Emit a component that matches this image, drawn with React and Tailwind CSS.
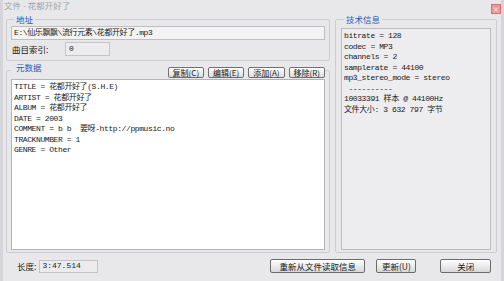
import React from 'react';

const metaLines = [
  'TITLE = 花都开好了(S.H.E)',
  'ARTIST = 花都开好了',
  'ALBUM = 花都开好了',
  'DATE = 2003',
  'COMMENT = b b  要呀-http://ppmusic.no',
  'TRACKNUMBER = 1',
  'GENRE = Other',
];

const techLines = [
  'bitrate = 128',
  'codec = MP3',
  'channels = 2',
  'samplerate = 44100',
  'mp3_stereo_mode = stereo',
  ' ----------',
  '10033391 样本 @ 44100Hz',
  '文件大小: 3 632 797 字节',
];

function SmallButton({ children }) {
  return (
    <button className="h-[11px] px-[4px] flex items-center justify-center border border-[#707070] rounded-[2px] bg-gradient-to-b from-white to-[#dcdcdc] text-[8px] leading-none text-[#202020]">
      {children}
    </button>
  );
}

function BigButton({ children, w }) {
  return (
    <button className={`${w} h-[14px] flex items-center justify-center border border-[#6c6c6c] rounded-[2px] bg-gradient-to-b from-white to-[#d8d8d8] text-[8.5px] leading-none text-[#202020]`}>
      {children}
    </button>
  );
}

export default function App() {
  return (
    <div className="w-[504px] h-[281px] bg-[#e8e8eb] border-l-[3px] border-r-[3px] border-[#d6d6da] flex flex-col font-['Noto_Sans_CJK_SC',sans-serif] text-[#1a1a1a] overflow-hidden">
      {/* title bar */}
      <div className="h-[14px] flex items-start justify-between pl-[1px] pr-[0px]">
        <span className="text-[8.5px] leading-[11px] text-[#a4a4a8] whitespace-pre">文件 - 花都开好了</span>
        <span className="mt-[4px] w-[10px] h-[10px] bg-[#e99a9a] border border-[#d87070] flex items-center justify-center text-white text-[7px] leading-none">
          ×
        </span>
      </div>

      <div className="flex gap-[5px] pl-[3px]">
        {/* left column */}
        <div className="w-[324px] flex flex-col">
          <fieldset className="border border-[#cdcdd2] rounded-[2px] px-[4px] pb-[4px]">
            <legend className="ml-[3px] px-[2px] text-[8.5px] leading-[11px] text-[#2a5bb0]">地址</legend>
            <div className="mt-[1px] h-[14px] bg-[#f3f3f3] border border-[#bdbdc2] flex items-center px-[2px] font-['Liberation_Mono','Noto_Sans_CJK_SC',monospace] text-[8px] tracking-[-0.4px] whitespace-pre">
              E:\仙乐飘飘\流行元素\花都开好了.mp3
            </div>
            <div className="mt-[2px] h-[14px] flex items-center">
              <span className="w-[50px] pl-[1px] text-[8.5px] leading-none">曲目索引:</span>
              <div className="ml-[4px] w-[45px] h-[14px] bg-[#ececee] border border-[#c4c4c8] flex items-center px-[3px] font-['Liberation_Mono',monospace] text-[8px]">
                0
              </div>
            </div>
          </fieldset>

          <fieldset className="mt-[1px] border border-[#cdcdd2] rounded-[2px] px-[4px] pb-[2px]">
            <legend className="w-full flex items-start justify-between">
              <span className="ml-[3px] px-[2px] text-[8.5px] leading-[11px] text-[#2a5bb0]">元数据</span>
              <div className="mt-[5px] flex gap-[4px] pr-[0px]">
                <SmallButton>复制(C)</SmallButton>
                <SmallButton>编辑(E)</SmallButton>
                <SmallButton>添加(A)</SmallButton>
                <SmallButton>移除(R)</SmallButton>
              </div>
            </legend>
            <div className="mt-[1px] h-[171px] bg-white border border-[#b4b4b8] px-[2px] pt-[2px] font-['Liberation_Mono','Noto_Sans_CJK_SC',monospace] text-[8px] leading-[10.5px] tracking-[-0.4px] whitespace-pre">
              {metaLines.map((l, i) => (
                <div key={i}>{l}</div>
              ))}
            </div>
          </fieldset>
        </div>

        {/* right column */}
        <fieldset className="w-[162px] border border-[#cdcdd2] rounded-[2px] px-[5px] pb-[2px]">
          <legend className="ml-[3px] px-[2px] text-[8.5px] leading-[11px] text-[#2a5bb0]">技术信息</legend>
          <div className="mt-[3px] h-[222px] bg-[#ededef] border border-[#bcbcc0] px-[2px] pt-[2px] font-['Liberation_Mono','Noto_Sans_CJK_SC',monospace] text-[8px] leading-[10.5px] tracking-[-0.4px] whitespace-pre">
            {techLines.map((l, i) => (
              <div key={i}>{l}</div>
            ))}
          </div>
        </fieldset>
      </div>

      {/* bottom row */}
      <div className="mt-[6px] flex items-center pl-[14px]">
        <span className="text-[8.5px] leading-none">长度:</span>
        <div className="ml-[3px] w-[59px] h-[13px] bg-[#ececee] border border-[#c4c4c8] flex items-center px-[2px] font-['Liberation_Mono',monospace] text-[8px]">
          3:47.514
        </div>
        <div className="ml-[172px]">
          <BigButton w="w-[95px]">重新从文件读取信息</BigButton>
        </div>
        <div className="ml-[11px]">
          <BigButton w="w-[40px]">更新(U)</BigButton>
        </div>
        <div className="ml-[24px]">
          <BigButton w="w-[51px]">关闭</BigButton>
        </div>
      </div>
    </div>
  );
}
